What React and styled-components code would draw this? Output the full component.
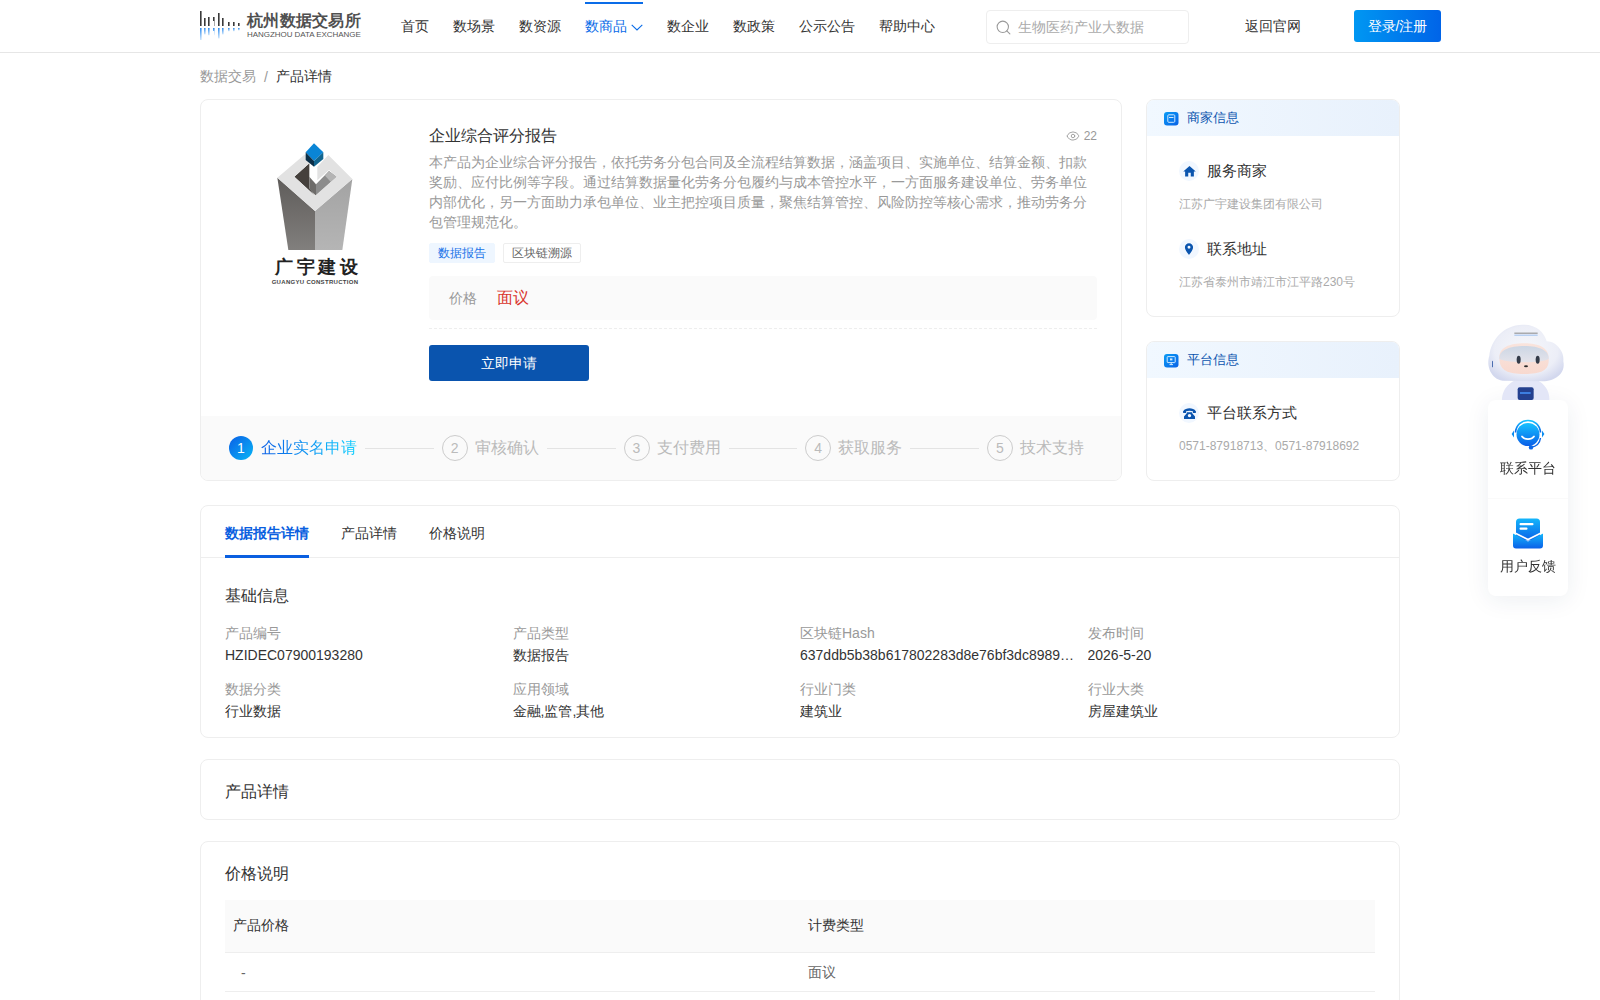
import React from 'react';
import styled, { createGlobalStyle } from 'styled-components';
import { Search, Eye } from 'lucide-react';
import { MdHome, MdPlace } from 'react-icons/md';

const FONT = `"Liberation Sans", sans-serif`;

const Global = createGlobalStyle`
  html, body { margin: 0; padding: 0; background: #fff; }
  body { font-family: ${FONT}; font-size: 14px; color: #333; }
  * { box-sizing: border-box; }
  ::-webkit-scrollbar { display: none; }
`;

const Header = styled.header`
  height: 53px; border-bottom: 1px solid #e6e6e6; padding-left: 200px; display: flex; align-items: center; background: #fff;
`;
const LogoBlock = styled.div`display: flex; align-items: center; width: 162px; gap: 7px; height: 52px;`;
const LogoMark = styled.div`flex: none; display: flex; width: 40px; height: 30px;`;
const LogoText = styled.div`display: flex; flex-direction: column; white-space: nowrap;`;
const LogoName = styled.span`font-size: 16px; line-height: 16px; font-weight: 600; letter-spacing: .3px; color: #505050;`;
const LogoSub = styled.span`font-size: 8px; line-height: 9px; color: #555; letter-spacing: -.05px; margin-top: 1px;`;
const Nav = styled.nav`display: flex; gap: 24px; margin-left: 39px; height: 52px;`;
const NavItem = styled.a`
  display: flex; align-items: center; gap: 4px; font-size: 14px; color: ${p => p.$active ? '#0a6ce8' : '#333'}; white-space: nowrap;
  border-top: 2px solid ${p => p.$active ? '#0a6ce8' : 'transparent'}; margin-top: 2px; padding-bottom: 2px;
`;
const SearchBox = styled.div`
  width: 203px; height: 34px; margin: 2px 0 0 51px; border: 1px solid #eee; border-radius: 4px; display: flex; align-items: center; padding-left: 8px; gap: 4px; color: #999;
`;
const SearchInput = styled.input`
  border: 0; outline: 0; flex: 1; min-width: 0; font: 14px ${FONT}; background: none;
  &::placeholder { color: #aaa; opacity: 1; }
`;
const BackLink = styled.a`margin: 2px 0 0 56px; color: #333; white-space: nowrap;`;
const LoginBtn = styled.button`
  margin-left: 53px; width: 87px; height: 32px; border: 0; border-radius: 3px; color: #fff; font: 14px ${FONT};
  background: linear-gradient(90deg, #0097f2, #0064e8); padding: 2px 0 0;
`;

const Page = styled.main`width: 1200px; margin: 0 auto; padding-bottom: 40px;`;
const Crumbs = styled.div`height: 46px; display: flex; align-items: center; gap: 8px; color: #999; padding-top: 2px;`;
const CrumbNow = styled.span`color: #333;`;

const TopRow = styled.div`display: flex; gap: 24px; align-items: stretch;`;
const Card = styled.section`
  border: 1px solid #eee; border-radius: 8px; background: #fff; overflow: hidden;
`;
const MainCard = styled(Card)`width: 922px; display: flex; flex-direction: column;`;
const Product = styled.div`display: flex; height: 316px;`;
const CoverCol = styled.div`width: 228px; display: flex; flex-direction: column; align-items: center; padding-top: 35px;`;
const CoverName = styled.div`font-size: 18px; line-height: 20px; font-weight: 700; letter-spacing: 3.8px; color: #222; margin-top: 6px; margin-right: -7px; white-space: nowrap;`;
const CoverSub = styled.div`font-size: 6px; line-height: 8px; font-weight: 700; color: #444; white-space: nowrap; letter-spacing: .3px; margin-top: 1px;`;
const Info = styled.div`flex: 1; padding: 24px 24px 0 0; min-width: 0;`;
const TitleRow = styled.div`display: flex; justify-content: space-between; align-items: center; height: 24px;`;
const Title = styled.h1`margin: 0; font-size: 16px; font-weight: 400; color: #333;`;
const Views = styled.span`display: flex; align-items: center; gap: 4px; font-size: 12px; color: #999;`;
const Desc = styled.p`margin: 4px 0 0; font-size: 14px; line-height: 20px; color: #999;`;
const Tags = styled.div`display: flex; gap: 8px; margin-top: 11px;`;
const Tag = styled.span`
  height: 20px; line-height: 18px; padding: 0 8px; font-size: 12px; border-radius: 2px;
  color: ${p => p.$primary ? '#1a73e8' : '#666'}; background: ${p => p.$primary ? '#eef6ff' : '#fff'};
  border: 1px solid ${p => p.$primary ? '#eef6ff' : '#eee'};
`;
const PriceBox = styled.div`
  margin-top: 13px; height: 44px; background: #fafafa; border-radius: 4px; display: flex; align-items: center; padding-left: 20px; gap: 20px;
`;
const PriceLabel = styled.span`color: #999; padding-top: 1px;`;
const PriceValue = styled.span`color: #d9332c; font-size: 16px;`;
const Dashed = styled.div`margin-top: 8px; border-top: 1px dashed #eee;`;
const ApplyBtn = styled.button`
  margin-top: 16px; width: 160px; height: 36px; border: 0; border-radius: 3px; background: #0a54ae; color: #fff; font: 14px ${FONT}; padding: 1px 0 0;
`;
const Steps = styled.div`
  height: 64px; background: #fafafa; display: flex; align-items: center; padding: 0 37px 0 28px;
`;
const Step = styled.div`display: flex; align-items: center; gap: 7px; white-space: nowrap; font-size: 16px; color: #bbb;`;
const StepNum = styled.span`
  width: 26px; height: 26px; border-radius: 50%; border: 1px solid #ccc; display: flex; align-items: center; justify-content: center; font-size: 14px; color: #bbb;
`;
const StepNumOn = styled(StepNum)`
  width: 24px; height: 24px; border: 0; color: #fff; background: linear-gradient(135deg, #0a5fe6, #08b6f6);
`;
const StepTextOn = styled.span`
  background: linear-gradient(90deg, #0a5fe6, #13d0ff); -webkit-background-clip: text; background-clip: text; color: transparent; margin-left: 1px;
`;
const StepLine = styled.span`flex: 1; height: 1px; background: #e3e3e3; margin: 0 8px;`;

const Side = styled.aside`width: 254px; display: flex; flex-direction: column; gap: 24px;`;
const SideCard = styled(Card)`flex: ${p => p.$grow || 'none'};`;
const SideHead = styled.div`
  height: 36px; padding-left: 17px; display: flex; align-items: center; gap: 8px; font-size: 13px; color: #0a54ae;
  background: linear-gradient(90deg, #f1f8ff, #e8f1fc);
`;
const SideBody = styled.div`padding: 25px 32px 25px;`;
const SideRow = styled.div`display: flex; align-items: center; gap: 8px; font-size: 15px; color: #333; line-height: 20px;`;
const IconDot = styled.span`
  width: 20px; height: 20px; border-radius: 50%; background: #f1f7ff; display: flex; align-items: center; justify-content: center; color: #0a54ae;
`;
const SideDesc = styled.div`font-size: 12px; line-height: 18px; color: #aaa; margin: 14px 0 26px; &:last-child { margin-bottom: 0; }`;

const TabCard = styled(Card)`margin-top: 24px;`;
const Tabs = styled.div`height: 52px; border-bottom: 1px solid #eee; display: flex; gap: 32px; padding-left: 24px;`;
const TabItem = styled.a`
  display: flex; align-items: center; height: 52px; font-size: 14px; color: ${p => p.$active ? '#0a5fe0' : '#333'}; font-weight: ${p => p.$active ? 600 : 400};
  border-bottom: 3px solid ${p => p.$active ? '#0a5fe0' : 'transparent'}; padding-top: 6px;
`;
const SectionBody = styled.div`padding: ${p => p.$top || 20}px 24px ${p => p.$bottom || 15}px;`;
const SectionTitle = styled.h2`margin: 0; font-size: 16px; line-height: 24px; font-weight: 400; color: #333;`;
const DetailGrid = styled.div`display: grid; grid-template-columns: repeat(4, 287.5px); row-gap: 12px; margin-top: 14px;`;
const Field = styled.div`min-width: 0; padding-right: 12px;`;
const FieldLabel = styled.div`line-height: 22px; color: #999;`;
const FieldValue = styled.div`line-height: 22px; color: #333; white-space: nowrap; overflow: hidden; text-overflow: ellipsis;`;
const GapCard = styled(Card)`margin-top: 21px;`;
const PriceTable = styled.table`width: 100%; border-collapse: collapse; margin-top: 14px; table-layout: fixed;`;
const Th = styled.th`height: 52px; background: #fafafa; font-weight: 400; color: #333; text-align: left; padding: 0 8px; border-bottom: 1px solid #eee;`;
const Td = styled.td`height: 39px; color: #666; padding: 2px 8px 0 ${p => p.$dash ? 16 : 8}px; border-bottom: 1px solid #eee;`;

const Float = styled.div`position: fixed; right: 32px; top: 400px; width: 80px;`;
const Robot = styled.div`position: absolute; left: -2px; top: -76px; width: 80px; height: 76px;`;
const FloatPanel = styled.div`position: relative; background: #fff; border-radius: 8px; box-shadow: 0 4px 24px rgba(30,50,90,.08);`;
const FloatItem = styled.div`
  height: 98px; display: flex; flex-direction: column; align-items: center; padding-top: 19px; gap: 9px; font-size: 14px; color: #333;
  & + & { border-top: 1px solid #fafafa; }
`;

const HzLogo = () => {
  const bars = [[0, 10], [4, 17], [8, 16], [13, 16], [18, 12], [22, 17], [28, 21], [33, 21], [38, 22]];
  return (
    <svg width="40" height="30" viewBox="0 0 40 30">
      <defs>
        <linearGradient id="refl" x1="0" y1="0" x2="0" y2="1">
          <stop offset="0" stopColor="#2f8df0" />
          <stop offset="1" stopColor="#cfe6fb" />
        </linearGradient>
      </defs>
      {bars.map(([x, top]) => (
        <g key={x}>
          <rect x={x} y={top - 10} width="1.6" height={25 - top} fill="#3a3a3a" />
          <rect x={x} y="17" width="1.6" height={(25 - top) * .8} fill="url(#refl)" />
        </g>
      ))}
      <rect x="12.5" y="10" width="1.8" height="5" fill="#fff" />
      <rect x="12.5" y="20" width="1.8" height="5" fill="#fff" />
    </svg>
  );
};

const Caret = () => (
  <svg width="12" height="7" viewBox="0 0 12 7" fill="none" stroke="currentColor" strokeWidth="1.1">
    <path d="M.7.8 6 6l5.3-5.2" />
  </svg>
);

const GuangyuMark = () => (
  <svg width="110" height="116" viewBox="0 0 330 348">
    <defs>
      <linearGradient id="gyl" x1="0" y1="0" x2="0" y2="1"><stop offset="0" stopColor="#5f5c5a" /><stop offset="1" stopColor="#817f7d" /></linearGradient>
      <linearGradient id="gyr" x1="0" y1="0" x2="0" y2="1"><stop offset="0" stopColor="#a3a3a3" /><stop offset="1" stopColor="#b5b5b5" /></linearGradient>
    </defs>
    <polygon points="52,128 165,228 165,345 85,345" fill="url(#gyl)" />
    <polygon points="277,132 165,228 165,345 247,345" fill="url(#gyr)" />
    <polygon points="103,125 148,85 148,160 165,182" fill="#45403c" />
    <polygon points="148,125 168,148 168,182 148,162" fill="#6e6c6a" />
    <polygon points="168,148 207,108 230,125 168,182" fill="#8c8c8c" />
    <polygon points="207,108 230,125 212,140 195,122" fill="#b4b4b4" />
    <polygon fill="#e2e2e2" points="52,128 135,58 148,70 148,85 103,125 165,182 230,125 207,105 172,136 172,95 205,60 277,132 165,228" />
    <polygon points="162,25 190,52 162,78 137,52" fill="#0a85d6" />
    <polygon points="137,52 162,78 162,95 137,75" fill="#0b2f48" />
    <polygon points="190,52 162,78 162,95 190,72" fill="#12658f" />
  </svg>
);

const SmallBadge = ({ kind }) => (
  <svg width="15" height="15" viewBox="0 0 15 15">
    <defs><linearGradient id={`sb${kind}`} x1="0" y1="0" x2="1" y2="1"><stop offset="0" stopColor="#0a9cf5" /><stop offset="1" stopColor="#0a62e6" /></linearGradient></defs>
    <rect x="0" y="1" width="14.5" height="13.5" rx="3" fill={`url(#sb${kind})`} />
    {kind === 'shop'
      ? <><rect x="3.8" y="3.8" width="7" height="7.5" rx="1" fill="none" stroke="#cfe8ff" strokeWidth="1" /><path d="M5 6.5h4.5" stroke="#cfe8ff" /></>
      : <><rect x="3.2" y="3.6" width="8" height="6" rx=".6" fill="none" stroke="#cfe8ff" strokeWidth="1" /><path d="M7.2 9.6v2M5.5 11.6h3.5" stroke="#cfe8ff" /><rect x="6" y="5.4" width="2.4" height="2" fill="#cfe8ff" /></>}
  </svg>
);

const PhoneIcon = () => (
  <svg width="13" height="11" viewBox="0 0 13 11" fill="#0a54ae">
    <path d="M0 3.4C1.6 1 4 .3 6.5.3S11.4 1 13 3.4c.1.5-.1 1.3-.3 1.6H9.9V3.2c-1.9-.7-4.9-.7-6.8 0V5H.3C.1 4.7-.1 3.9 0 3.4z" />
    <path d="M4 4.2h5l.4 1.4L12 8.4V11H1V8.4l2.6-2.8L4 4.2zm2.5 1.7a1.7 1.7 0 1 0 0 3.4 1.7 1.7 0 0 0 0-3.4z" />
  </svg>
);

const HeadsetIcon = () => (
  <svg width="34" height="32" viewBox="0 0 34 32">
    <defs>
      <linearGradient id="hs" x1="0" y1="0" x2="0" y2="1"><stop offset="0" stopColor="#16c2ff" /><stop offset="1" stopColor="#0a5fe8" /></linearGradient>
    </defs>
    <path d="M4.5 13.5C5 6 10.5 1.5 17 1.5S29 6 29.5 13.5" fill="none" stroke="url(#hs)" strokeWidth="1.6" />
    <path d="M3 11.5 L.6 15 L3 18.6 Z M31 11.5 L33.4 15 L31 18.6 Z" fill="#0a8cf0" />
    <circle cx="17" cy="15.5" r="11.5" fill="url(#hs)" />
    <path d="M11 17.5c2.6 3.4 9.4 3.4 12 0" stroke="#fff" strokeWidth="1.8" fill="none" strokeLinecap="round" />
    <path d="M29.5 19c-.6 5-4.4 8.5-9.5 9.2" fill="none" stroke="#0a66e8" strokeWidth="1.4" />
    <circle cx="20" cy="28.4" r="2.2" fill="#0a66e8" />
  </svg>
);

const MailIcon = () => (
  <svg width="30" height="31" viewBox="0 0 30 31">
    <defs>
      <linearGradient id="ml" x1="0" y1="0" x2="0" y2="1"><stop offset="0" stopColor="#14b6fb" /><stop offset="1" stopColor="#0a60e8" /></linearGradient>
    </defs>
    <rect x="3" y="0.5" width="24" height="22" rx="3.5" fill="url(#ml)" />
    <rect x="6.5" y="5" width="14" height="2.2" rx="1" fill="#fff" />
    <rect x="6.5" y="9.5" width="8" height="2.2" rx="1" fill="#fff" />
    <path d="M0 15.5 L15 23.5 L30 15.5 V27.5 A3 3 0 0 1 27 30.5 H3 A3 3 0 0 1 0 27.5 Z" fill="url(#ml)" />
    <path d="M0.5 14.2 L15 21.5 L29.5 14.2" stroke="#fff" strokeWidth="1.6" fill="none" />
  </svg>
);

const RobotArt = () => (
  <svg width="80" height="76" viewBox="0 0 240 228">
    <defs>
      <radialGradient id="rbh" cx=".5" cy=".45" r=".6"><stop offset="0" stopColor="#f6f7fb" /><stop offset=".7" stopColor="#eceef7" /><stop offset="1" stopColor="#d3d8ee" /></radialGradient>
      <linearGradient id="rbv" x1="0" y1="0" x2="0" y2="1"><stop offset="0" stopColor="#c4d4e6" /><stop offset="1" stopColor="#e0e4ee" /></linearGradient>
      <linearGradient id="rbf" x1="0" y1="0" x2="0" y2="1"><stop offset="0" stopColor="#f9e4dd" /><stop offset="1" stopColor="#f8d9cf" /></linearGradient>
    </defs>
    <path d="M48 225C48 195 75 165 110 165H135C165 165 192 195 190 228H48Z" fill="#e3e6f7" />
    <path d="M50 170C15 165 0 125 10 95C15 50 50 3 110 2C150 0 175 25 182 52C212 52 236 85 232 112C240 150 205 172 170 172Z" fill="url(#rbh)" />
    <rect x="95" y="190" width="48" height="38" rx="6" fill="#24408f" />
    <rect x="102" y="204" width="32" height="6" fill="#3d7ee0" />
    <path d="M40 105C38 70 70 58 115 58S190 72 188 105C190 140 165 150 115 150S42 140 40 105Z" fill="url(#rbf)" />
    <path d="M40 105C38 78 70 66 115 66S190 80 188 105C165 118 70 118 40 105Z" fill="url(#rbv)" opacity=".85" />
    <ellipse cx="98" cy="107" rx="6" ry="12" fill="#333a48" />
    <ellipse cx="155" cy="107" rx="6" ry="12" fill="#333a48" />
    <ellipse cx="120" cy="127" rx="6" ry="3" fill="#2a2a2a" />
    <rect x="18" y="110" width="3" height="20" rx="1.5" fill="#4a6db0" />
    <rect x="85" y="26" width="70" height="3" fill="#888" />
    <rect x="85" y="32" width="70" height="3" fill="#9fc0ef" />
  </svg>
);

const fields = [
  ['产品编号', 'HZIDEC07900193280'],
  ['产品类型', '数据报告'],
  ['区块链Hash', '637ddb5b38b617802283d8e76bf3dc8989a4f1c07d2e56ab'],
  ['发布时间', '2026-5-20'],
  ['数据分类', '行业数据'],
  ['应用领域', '金融,监管,其他'],
  ['行业门类', '建筑业'],
  ['行业大类', '房屋建筑业'],
];
const navs = ['首页', '数场景', '数资源', '数商品', '数企业', '数政策', '公示公告', '帮助中心'];
const steps = ['审核确认', '支付费用', '获取服务', '技术支持'];

export default function App() {
  return (
    <>
      <Global />
      <Header>
        <LogoBlock>
          <LogoMark><HzLogo /></LogoMark>
          <LogoText>
            <LogoName>杭州数据交易所</LogoName>
            <LogoSub>HANGZHOU DATA EXCHANGE</LogoSub>
          </LogoText>
        </LogoBlock>
        <Nav>
          {navs.map(n => (
            <NavItem key={n} $active={n === '数商品'}>
              {n}{n === '数商品' && <Caret />}
            </NavItem>
          ))}
        </Nav>
        <SearchBox>
          <Search size={17} strokeWidth={1.5} />
          <SearchInput placeholder="生物医药产业大数据" />
        </SearchBox>
        <BackLink>返回官网</BackLink>
        <LoginBtn>登录/注册</LoginBtn>
      </Header>
      <Page>
        <Crumbs>数据交易<span>/</span><CrumbNow>产品详情</CrumbNow></Crumbs>
        <TopRow>
          <MainCard>
            <Product>
              <CoverCol>
                <GuangyuMark />
                <CoverName>广宇建设</CoverName>
                <CoverSub>GUANGYU CONSTRUCTION</CoverSub>
              </CoverCol>
              <Info>
                <TitleRow>
                  <Title>企业综合评分报告</Title>
                  <Views><Eye size={14} strokeWidth={1.5} />22</Views>
                </TitleRow>
                <Desc>本产品为企业综合评分报告，依托劳务分包合同及全流程结算数据，涵盖项目、实施单位、结算金额、扣款奖励、应付比例等字段。通过结算数据量化劳务分包履约与成本管控水平，一方面服务建设单位、劳务单位内部优化，另一方面助力承包单位、业主把控项目质量，聚焦结算管控、风险防控等核心需求，推动劳务分包管理规范化。</Desc>
                <Tags>
                  <Tag $primary>数据报告</Tag>
                  <Tag>区块链溯源</Tag>
                </Tags>
                <PriceBox>
                  <PriceLabel>价格</PriceLabel>
                  <PriceValue>面议</PriceValue>
                </PriceBox>
                <Dashed />
                <ApplyBtn>立即申请</ApplyBtn>
              </Info>
            </Product>
            <Steps>
              <Step><StepNumOn>1</StepNumOn><StepTextOn>企业实名申请</StepTextOn></Step>
              {steps.map((s, i) => (
                <React.Fragment key={s}>
                  <StepLine />
                  <Step><StepNum>{i + 2}</StepNum>{s}</Step>
                </React.Fragment>
              ))}
            </Steps>
          </MainCard>
          <Side>
            <SideCard>
              <SideHead><SmallBadge kind="shop" />商家信息</SideHead>
              <SideBody>
                <SideRow><IconDot><MdHome size={15} /></IconDot>服务商家</SideRow>
                <SideDesc>江苏广宇建设集团有限公司</SideDesc>
                <SideRow><IconDot><MdPlace size={14} /></IconDot>联系地址</SideRow>
                <SideDesc>江苏省泰州市靖江市江平路230号</SideDesc>
              </SideBody>
            </SideCard>
            <SideCard $grow="1">
              <SideHead><SmallBadge kind="screen" />平台信息</SideHead>
              <SideBody>
                <SideRow><IconDot><PhoneIcon /></IconDot>平台联系方式</SideRow>
                <SideDesc>0571-87918713、0571-87918692</SideDesc>
              </SideBody>
            </SideCard>
          </Side>
        </TopRow>
        <TabCard>
          <Tabs>
            <TabItem $active>数据报告详情</TabItem>
            <TabItem>产品详情</TabItem>
            <TabItem>价格说明</TabItem>
          </Tabs>
          <SectionBody $top={26}>
            <SectionTitle>基础信息</SectionTitle>
            <DetailGrid>
              {fields.map(([k, v]) => (
                <Field key={k}>
                  <FieldLabel>{k}</FieldLabel>
                  <FieldValue>{v}</FieldValue>
                </Field>
              ))}
            </DetailGrid>
          </SectionBody>
        </TabCard>
        <GapCard>
          <SectionBody><SectionTitle>产品详情</SectionTitle></SectionBody>
        </GapCard>
        <GapCard>
          <SectionBody $top={20} $bottom={24}>
            <SectionTitle>价格说明</SectionTitle>
            <PriceTable>
              <thead><tr><Th>产品价格</Th><Th>计费类型</Th></tr></thead>
              <tbody><tr><Td $dash>-</Td><Td>面议</Td></tr></tbody>
            </PriceTable>
          </SectionBody>
        </GapCard>
      </Page>
      <Float>
        <FloatPanel>
          <Robot><RobotArt /></Robot>
          <FloatItem><HeadsetIcon />联系平台</FloatItem>
          <FloatItem><MailIcon />用户反馈</FloatItem>
        </FloatPanel>
      </Float>
    </>
  );
}
